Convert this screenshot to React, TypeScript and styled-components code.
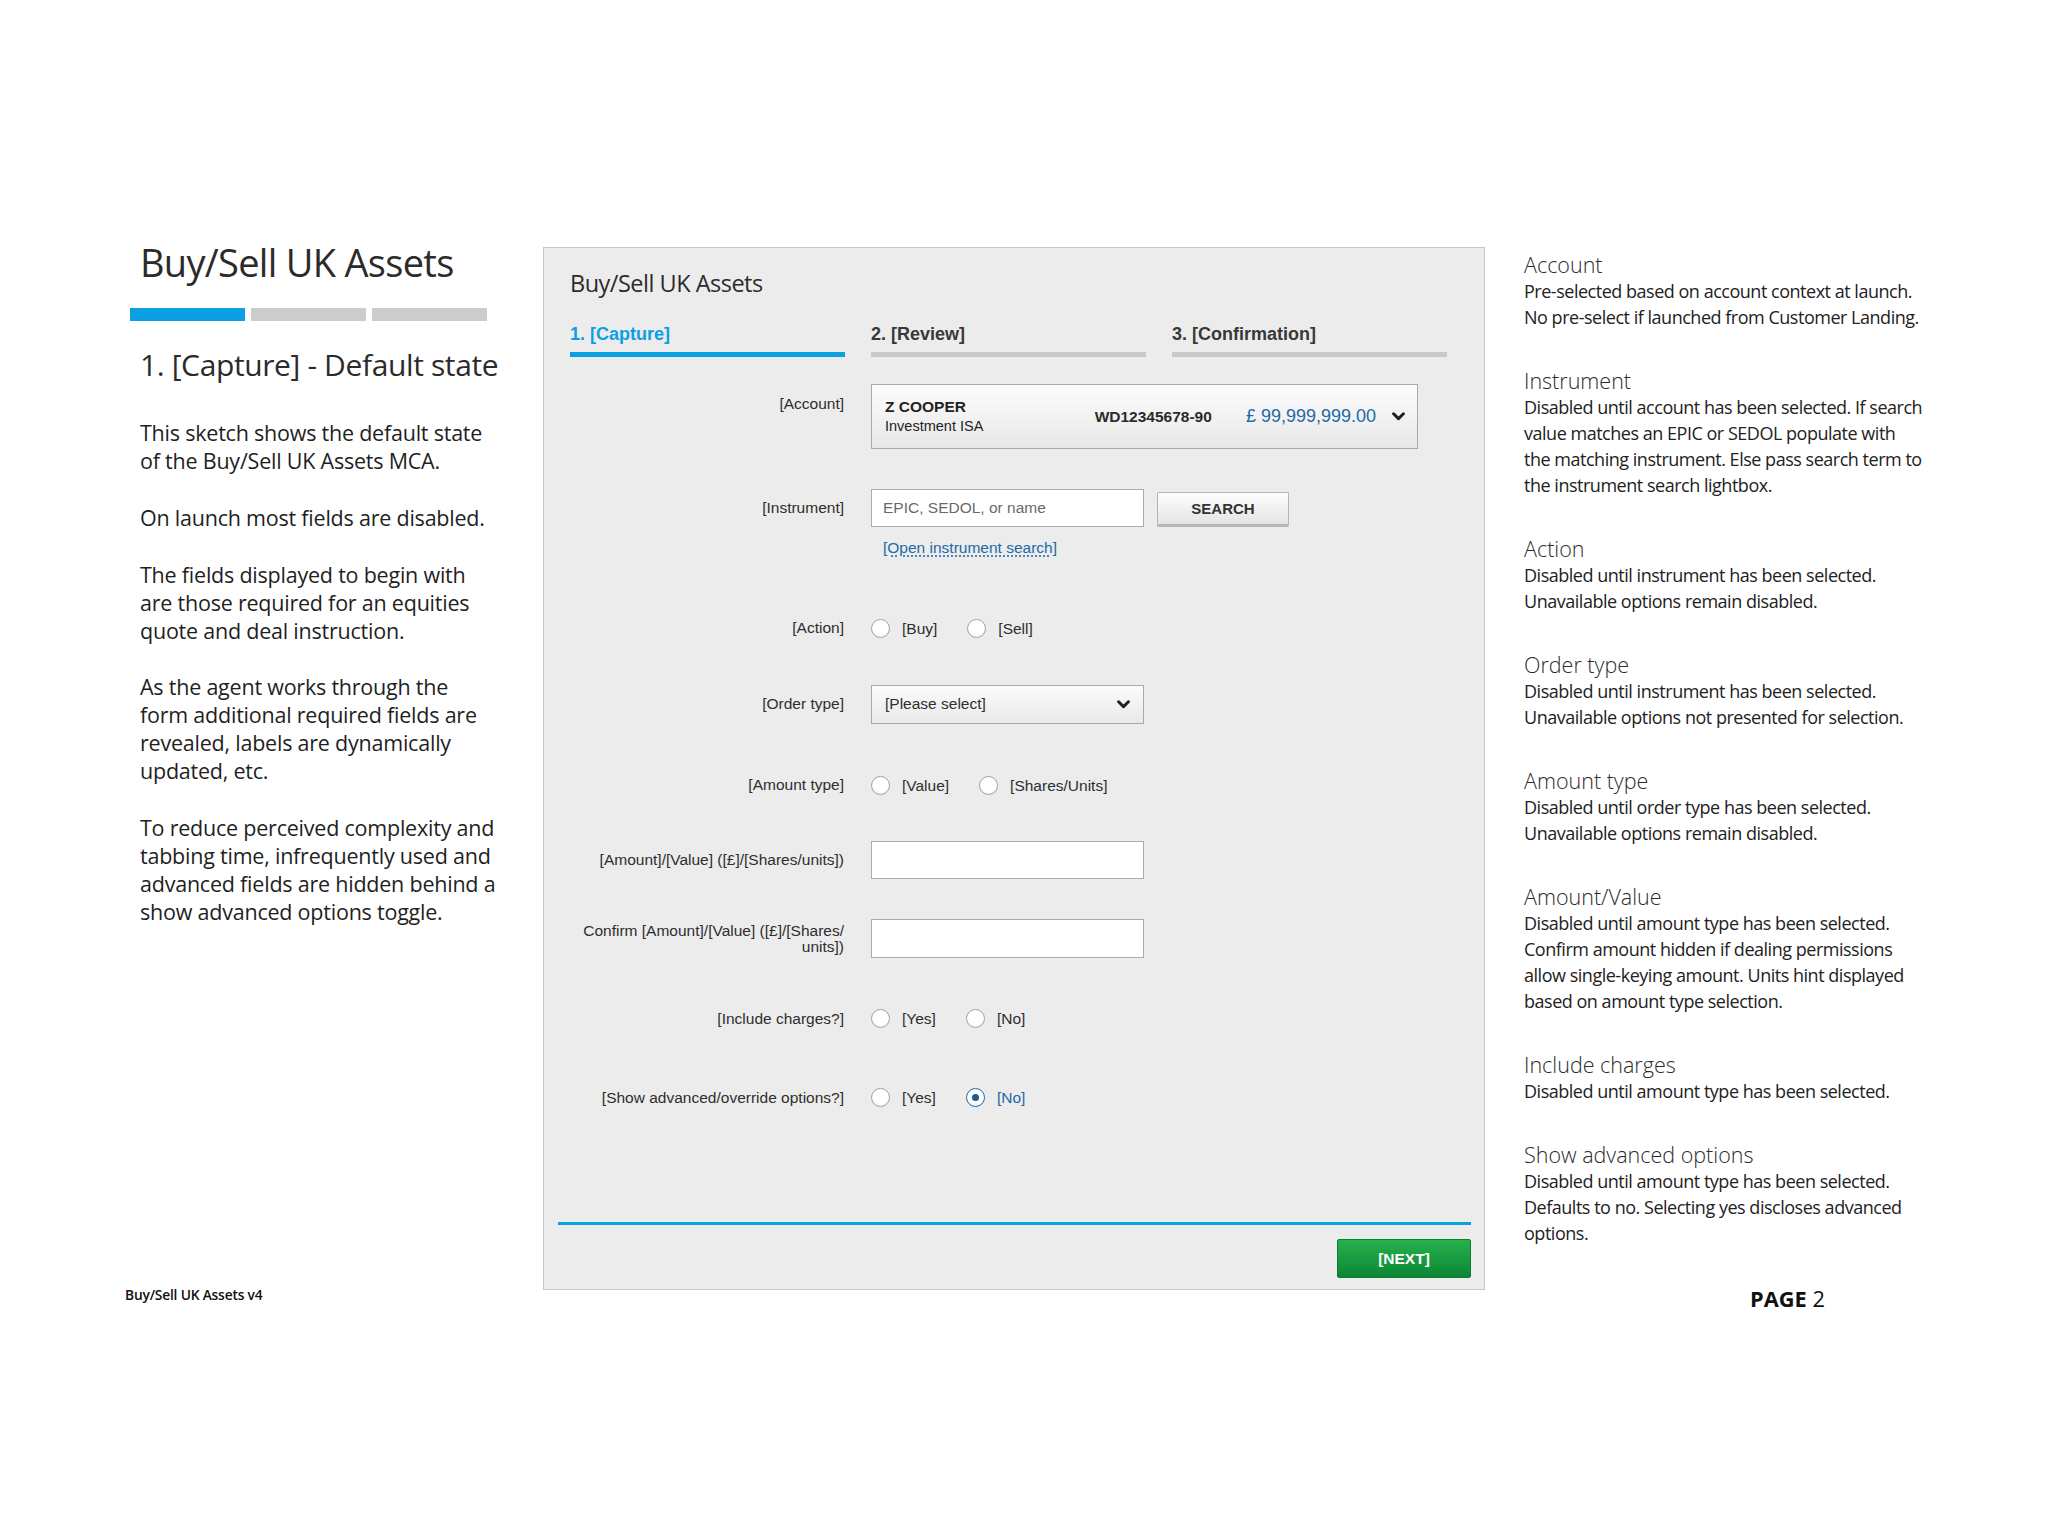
import React from "react";
import styled, { createGlobalStyle } from "styled-components";

const GlobalStyle = createGlobalStyle`
  html, body { margin: 0; padding: 0; background: #ffffff; }
  body { font-family: "Open Sans", "Noto Sans", sans-serif; color: #2c2c2c; }
  * { box-sizing: border-box; }
`;

const SANS = `"Open Sans", "Noto Sans", sans-serif`;
const ARIAL = `"Liberation Sans", Arial, Helvetica, sans-serif`;
const BLUE = "#0aa0e2";
const LINK = "#1c6aa6";

const Page = styled.div`
  width: 2048px;
  height: 1536px;
  padding-top: 238px;
  display: flex;
  flex-direction: column;
`;

const Main = styled.div`
  display: flex;
  align-items: flex-start;
  padding-left: 130px;
`;

/* ---------- left column ---------- */
const LeftColumn = styled.aside`
  width: 370px;
  margin-right: 43px;
  flex-shrink: 0;
`;

const PageTitle = styled.h1`
  margin: 0;
  padding-left: 10px;
  font-family: ${SANS};
  font-weight: 400;
  font-size: 38px;
  letter-spacing: -0.7px;
  line-height: 48px;
  color: #2b2b2b;
  white-space: nowrap;
`;

const StepBars = styled.div`
  display: flex;
  gap: 6px;
  margin-top: 22px;
`;

const StepBar = styled.span<{ $active?: boolean }>`
  width: 115px;
  height: 13px;
  background: ${(p) => (p.$active ? BLUE : "#cccccc")};
`;

const StateTitle = styled.h2`
  margin: 25px 0 0;
  padding-left: 10px;
  font-family: ${SANS};
  font-weight: 400;
  font-size: 30px;
  letter-spacing: -0.38px;
  line-height: 38px;
  color: #2b2b2b;
  white-space: nowrap;
`;

const Notes = styled.div`
  margin-top: 35px;
  padding-left: 10px;
  display: flex;
  flex-direction: column;
  gap: 28.8px;
`;

const NoteParagraph = styled.p`
  margin: 0;
  font-family: ${SANS};
  font-size: 21.5px;
  letter-spacing: -0.22px;
  line-height: 28px;
  color: #1f1f1f;
`;

const Line = styled.span`
  display: block;
  white-space: nowrap;
`;

/* ---------- panel ---------- */
const Panel = styled.section`
  width: 942px;
  height: 1043px;
  margin-top: 9px;
  flex-shrink: 0;
  background: #ececec;
  border: 1px solid #c6c6c6;
  padding-top: 20px;
  display: flex;
  flex-direction: column;
`;

const PanelTitle = styled.h3`
  margin: 0;
  padding-left: 26px;
  font-family: ${SANS};
  font-weight: 400;
  font-size: 23.5px;
  letter-spacing: -0.5px;
  line-height: 30px;
  color: #2b2b2b;
`;

const Tabs = styled.div`
  display: grid;
  grid-template-columns: repeat(3, 275px);
  column-gap: 26px;
  margin-top: 25px;
  padding-left: 26px;
`;

const Tab = styled.div<{ $active?: boolean }>`
  font-family: ${ARIAL};
  font-weight: 700;
  font-size: 18px;
  line-height: 22px;
  padding-bottom: 7px;
  color: ${(p) => (p.$active ? BLUE : "#383838")};
  border-bottom: 5px solid ${(p) => (p.$active ? BLUE : "#c9c9c9")};
`;

const Form = styled.div`
  margin-top: 27px;
  padding-left: 26px;
  display: flex;
  flex-direction: column;
`;

const FieldRow = styled.div<{ $top?: number; $height?: number; $align?: string }>`
  display: grid;
  grid-template-columns: 274px 1fr;
  column-gap: 27px;
  align-items: ${(p) => p.$align || "center"};
  margin-top: ${(p) => p.$top || 0}px;
  height: ${(p) => (p.$height ? `${p.$height}px` : "auto")};
`;

const Label = styled.div<{ $pad?: number; $lh?: number }>`
  font-family: ${ARIAL};
  font-size: 15.5px;
  line-height: ${(p) => p.$lh || 18}px;
  padding-top: ${(p) => p.$pad || 0}px;
  color: #2e2e2e;
  text-align: right;
`;

const AccountSelect = styled.div`
  width: 547px;
  height: 65px;
  border: 1px solid #a9a9a9;
  background: linear-gradient(#fcfcfc, #e8e8e8);
  display: flex;
  align-items: center;
  justify-content: space-between;
  padding: 0 12px 0 13px;
  font-family: ${ARIAL};
`;

const AccountName = styled.div`
  display: flex;
  flex-direction: column;
`;

const AccountHolder = styled.span`
  font-weight: 700;
  font-size: 15.5px;
  line-height: 19px;
  color: #222;
`;

const AccountType = styled.span`
  font-size: 14.5px;
  line-height: 21px;
  color: #222;
`;

const AccountMeta = styled.div`
  display: flex;
  align-items: center;
`;

const AccountNumber = styled.span`
  font-weight: 700;
  font-size: 15.5px;
  color: #2a2a2a;
  margin-right: 34px;
`;

const AccountBalance = styled.span`
  font-size: 18px;
  color: ${LINK};
  margin-right: 16px;
`;

const InstrumentLine = styled.div`
  display: flex;
  align-items: center;
  gap: 13px;
`;

const TextInput = styled.div<{ $tall?: boolean }>`
  width: 273px;
  height: ${(p) => (p.$tall ? 39 : 38)}px;
  background: #ffffff;
  border: 1px solid #ababab;
  padding-left: 11px;
  display: flex;
  align-items: center;
  font-family: ${ARIAL};
  font-size: 15.5px;
  color: #6a6a6a;
`;

const SearchButton = styled.button`
  width: 132px;
  height: 33px;
  border: 1px solid #b4b4b4;
  border-radius: 1px;
  background: linear-gradient(#fefefe, #e4e4e4);
  box-shadow: 0 2px 0 #b9b9b9;
  font-family: ${ARIAL};
  font-weight: 700;
  font-size: 15px;
  color: #333;
  padding: 0;
`;

const InstrumentLink = styled.a`
  display: inline-block;
  margin: 12px 0 0 12px;
  font-family: ${ARIAL};
  font-size: 15.5px;
  line-height: 18px;
  color: ${LINK};
  text-decoration: underline dotted;
  text-underline-offset: 3px;
`;

const Options = styled.div`
  display: flex;
  align-items: center;
  gap: 30px;
`;

const Option = styled.label<{ $checked?: boolean }>`
  display: flex;
  align-items: center;
  gap: 12px;
  font-family: ${ARIAL};
  font-size: 15.5px;
  line-height: 18px;
  padding-top: 1px;
  color: ${(p) => (p.$checked ? LINK : "#2e2e2e")};
`;

const Radio = styled.span<{ $checked?: boolean }>`
  width: 19px;
  height: 19px;
  margin-top: -1px;
  border-radius: 50%;
  border: ${(p) => (p.$checked ? `1.5px solid ${LINK}` : "1px solid #a2a2a2")};
  background: radial-gradient(circle at 50% 40%, #ffffff 55%, #e9e9e9 100%);
  display: flex;
  align-items: center;
  justify-content: center;
  &::after {
    content: "";
    display: ${(p) => (p.$checked ? "block" : "none")};
    width: 7px;
    height: 7px;
    border-radius: 50%;
    background: #1a5d93;
  }
`;

const Select = styled.div`
  width: 273px;
  height: 39px;
  border: 1px solid #a9a9a9;
  background: linear-gradient(#fbfbfb, #e9e9e9);
  display: flex;
  align-items: center;
  justify-content: space-between;
  padding: 0 13px 0 13px;
  font-family: ${ARIAL};
  font-size: 15.5px;
  color: #2e2e2e;
`;

const PanelFooter = styled.div`
  margin-top: auto;
  padding: 0 13px 11px 14px;
`;

const FooterRule = styled.div`
  border-top: 3px solid ${BLUE};
  padding-top: 14px;
  display: flex;
  justify-content: flex-end;
`;

const NextButton = styled.button`
  width: 134px;
  height: 39px;
  border: 1px solid #0d7c33;
  border-radius: 2px;
  background: linear-gradient(#26b14b, #0c8636);
  color: #ffffff;
  font-family: ${ARIAL};
  font-weight: 700;
  font-size: 15.5px;
  padding: 0;
`;

/* ---------- right column ---------- */
const RightColumn = styled.aside`
  margin-left: 39px;
  margin-top: 14px;
  display: flex;
  flex-direction: column;
  gap: 38px;
`;

const NoteSection = styled.div`
  display: flex;
  flex-direction: column;
`;

const NoteHeading = styled.div`
  font-family: ${SANS};
  font-weight: 300;
  font-size: 21.5px;
  line-height: 26px;
  color: #2b2b2b;
  white-space: nowrap;
`;

const NoteBody = styled.div`
  font-family: ${SANS};
  font-size: 18px;
  letter-spacing: -0.48px;
  line-height: 26px;
  color: #222222;
`;

/* ---------- page footer ---------- */
const Footer = styled.footer`
  display: grid;
  grid-template-columns: 1625px auto;
  align-items: start;
  padding-left: 125px;
  margin-top: -3px;
`;

const Version = styled.div`
  font-family: ${SANS};
  font-weight: 600;
  font-size: 13.8px;
  line-height: 16px;
  color: #111;
  letter-spacing: -0.2px;
`;

const PageNumber = styled.div`
  font-family: ${SANS};
  font-size: 21.8px;
  line-height: 24px;
  color: #111;
  b { font-weight: 700; }
`;

const Chevron = () => (
  <svg width={13} height={9} viewBox="0 0 13 9" aria-hidden="true">
    <polyline points="1.6,1.8 6.5,6.6 11.4,1.8" fill="none" stroke="#1f1f1f" strokeWidth="3" strokeLinecap="round" strokeLinejoin="round" />
  </svg>
);

const leftNotes: string[][] = [
  ["This sketch shows the default state", "of the Buy/Sell UK Assets MCA."],
  ["On launch most fields are disabled."],
  ["The fields displayed to begin with", "are those required for an equities", "quote and deal instruction."],
  ["As the agent works through the", "form additional required fields are", "revealed, labels are dynamically", "updated, etc."],
  ["To reduce perceived complexity and", "tabbing time, infrequently used and", "advanced fields are hidden behind a", "show advanced options toggle."],
];

const rightNotes: { title: string; lines: string[] }[] = [
  { title: "Account", lines: ["Pre-selected based on account context at launch.", "No pre-select if launched from Customer Landing."] },
  {
    title: "Instrument",
    lines: [
      "Disabled until account has been selected. If search",
      "value matches an EPIC or SEDOL populate with",
      "the matching instrument. Else pass search term to",
      "the instrument search lightbox.",
    ],
  },
  { title: "Action", lines: ["Disabled until instrument has been selected.", "Unavailable options remain disabled."] },
  { title: "Order type", lines: ["Disabled until instrument has been selected.", "Unavailable options not presented for selection."] },
  { title: "Amount type", lines: ["Disabled until order type has been selected.", "Unavailable options remain disabled."] },
  {
    title: "Amount/Value",
    lines: [
      "Disabled until amount type has been selected.",
      "Confirm amount hidden if dealing permissions",
      "allow single-keying amount. Units hint displayed",
      "based on amount type selection.",
    ],
  },
  { title: "Include charges", lines: ["Disabled until amount type has been selected."] },
  {
    title: "Show advanced options",
    lines: ["Disabled until amount type has been selected.", "Defaults to no. Selecting yes discloses advanced", "options."],
  },
];

const RadioGroup = ({ options, checked }: { options: string[]; checked?: number }) => (
  <Options>
    {options.map((o, i) => (
      <Option key={o} $checked={checked === i}>
        <Radio $checked={checked === i} />
        {o}
      </Option>
    ))}
  </Options>
);

export default function App() {
  return (
    <>
      <GlobalStyle />
      <Page>
        <Main>
          <LeftColumn>
            <PageTitle>Buy/Sell UK Assets</PageTitle>
            <StepBars>
              <StepBar $active />
              <StepBar />
              <StepBar />
            </StepBars>
            <StateTitle>1. [Capture] - Default state</StateTitle>
            <Notes>
              {leftNotes.map((p, i) => (
                <NoteParagraph key={i}>
                  {p.map((l) => (
                    <Line key={l}>{l}</Line>
                  ))}
                </NoteParagraph>
              ))}
            </Notes>
          </LeftColumn>

          <Panel>
            <PanelTitle>Buy/Sell UK Assets</PanelTitle>
            <Tabs>
              <Tab $active>1. [Capture]</Tab>
              <Tab>2. [Review]</Tab>
              <Tab>3. [Confirmation]</Tab>
            </Tabs>
            <Form>
              <FieldRow $align="start">
                <Label $pad={11}>[Account]</Label>
                <AccountSelect>
                  <AccountName>
                    <AccountHolder>Z COOPER</AccountHolder>
                    <AccountType>Investment ISA</AccountType>
                  </AccountName>
                  <AccountMeta>
                    <AccountNumber>WD12345678-90</AccountNumber>
                    <AccountBalance>£ 99,999,999.00</AccountBalance>
                    <Chevron />
                  </AccountMeta>
                </AccountSelect>
              </FieldRow>

              <FieldRow $top={40} $align="start">
                <Label $lh={38}>[Instrument]</Label>
                <div>
                  <InstrumentLine>
                    <TextInput>EPIC, SEDOL, or name</TextInput>
                    <SearchButton>SEARCH</SearchButton>
                  </InstrumentLine>
                  <InstrumentLink>[Open instrument search]</InstrumentLink>
                </div>
              </FieldRow>

              <FieldRow $top={31} $height={78}>
                <Label>[Action]</Label>
                <RadioGroup options={["[Buy]", "[Sell]"]} />
              </FieldRow>

              <FieldRow $height={74}>
                <Label>[Order type]</Label>
                <Select>
                  <span>[Please select]</span>
                  <Chevron />
                </Select>
              </FieldRow>

              <FieldRow $height={88}>
                <Label>[Amount type]</Label>
                <RadioGroup options={["[Value]", "[Shares/Units]"]} />
              </FieldRow>

              <FieldRow $height={62}>
                <Label>[Amount]/[Value] ([£]/[Shares/units])</Label>
                <TextInput />
              </FieldRow>

              <FieldRow $height={95}>
                <Label $lh={16}>
                  Confirm [Amount]/[Value] ([£]/[Shares/
                  <br />
                  units])
                </Label>
                <TextInput $tall />
              </FieldRow>

              <FieldRow $height={65}>
                <Label>[Include charges?]</Label>
                <RadioGroup options={["[Yes]", "[No]"]} />
              </FieldRow>

              <FieldRow $height={93}>
                <Label>[Show advanced/override options?]</Label>
                <RadioGroup options={["[Yes]", "[No]"]} checked={1} />
              </FieldRow>
            </Form>

            <PanelFooter>
              <FooterRule>
                <NextButton>[NEXT]</NextButton>
              </FooterRule>
            </PanelFooter>
          </Panel>

          <RightColumn>
            {rightNotes.map((s) => (
              <NoteSection key={s.title}>
                <NoteHeading>{s.title}</NoteHeading>
                <NoteBody>
                  {s.lines.map((l) => (
                    <Line key={l}>{l}</Line>
                  ))}
                </NoteBody>
              </NoteSection>
            ))}
          </RightColumn>
        </Main>

        <Footer>
          <Version>Buy/Sell UK Assets v4</Version>
          <PageNumber>
            <b>PAGE</b> 2
          </PageNumber>
        </Footer>
      </Page>
    </>
  );
}
